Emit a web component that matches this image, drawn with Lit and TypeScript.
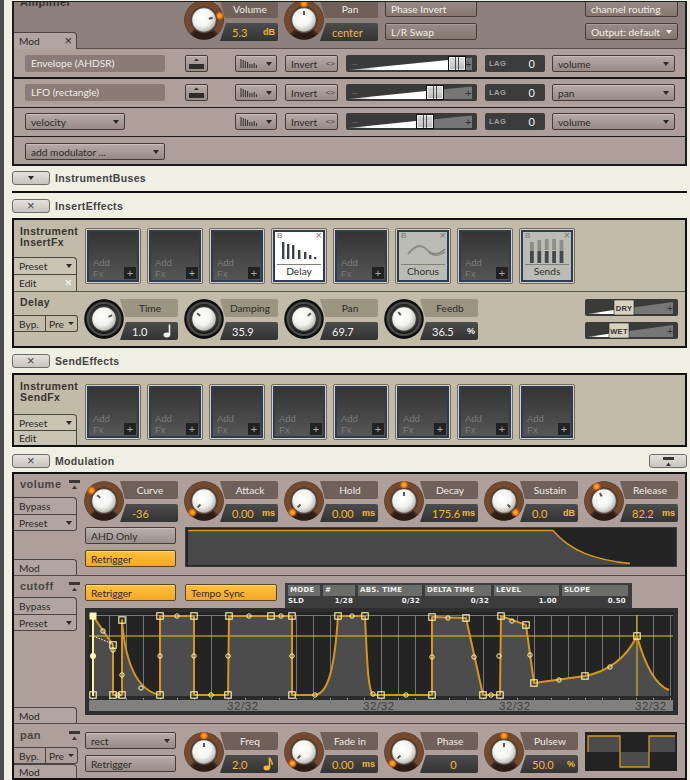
import { LitElement, html, css, svg } from "lit";
import { customElement, property } from "lit/decorators.js";

@customElement("k-knob")
class KKnob extends LitElement {
  @property({ type: Number }) angle = 0;
  @property() theme = "brown";
  static styles = css`
    :host { display: block; width: 40px; height: 40px; position: relative; z-index: 1; }
    svg { display: block; }
  `;
  render() {
    const a = (this.angle * Math.PI) / 180;
    const p = (r: number) => [20 + r * Math.sin(a), 20 - r * Math.cos(a)];
    const [x1, y1] = p(5);
    const [x2, y2] = p(9);
    const [gx, gy] = p(16.2);
    const brown = this.theme === "brown";
    return html`<svg width="40" height="40" viewBox="0 0 40 40">
      <defs>
        <radialGradient id="cap" cx="0.42" cy="0.38" r="0.68">
          <stop offset="0" stop-color="#ffffff" />
          <stop offset="0.55" stop-color="#f3f3ef" />
          <stop offset="0.85" stop-color="#c4c4c0" />
          <stop offset="1" stop-color="#8e8e8a" />
        </radialGradient>
        <radialGradient id="glow">
          <stop offset="0" stop-color="#ffc02a" />
          <stop offset="0.55" stop-color="#f77f10" />
          <stop offset="1" stop-color="#c14a0c" stop-opacity="0.4" />
        </radialGradient>
        <linearGradient id="blk" x1="0" y1="0" x2="0" y2="1">
          <stop offset="0" stop-color="#161616" />
          <stop offset="0.45" stop-color="#3a3a3a" />
          <stop offset="1" stop-color="#0c0c0c" />
        </linearGradient>
      </defs>
      ${brown
        ? svg`<circle cx="20" cy="20" r="19.8" fill="#3a2a22" />
            <path d="M8.3 31.7A16.5 16.5 0 1 1 31.7 31.7" fill="none" stroke="#74492e" stroke-width="6" />
            <path d="M10.5 33.5A16.5 16.5 0 0 0 29.5 33.5" fill="none" stroke="#2c1e17" stroke-width="6" />
            <circle cx="${gx}" cy="${gy}" r="4.4" fill="url(#glow)" />`
        : svg`<circle cx="20" cy="20" r="19.8" fill="url(#blk)" />
            <circle cx="20" cy="20" r="16" fill="none" stroke="#4c4c4c" stroke-width="2.2" />
            <circle cx="20" cy="20" r="18.6" fill="none" stroke="#0c0c0c" stroke-width="1.6" />`}
      <circle cx="20" cy="20" r="13" fill="${brown ? "#5c4f48" : "#3d3d39"}" />
      <circle cx="20" cy="20" r="11.8" fill="url(#cap)" />
      <line x1="${x1}" y1="${y1}" x2="${x2}" y2="${y2}" stroke="#555" stroke-width="2" />
    </svg>`;
  }
}

const arrow = (c = "") => html`<span class="arr ${c}"></span>`;

const wave = html`<svg width="18" height="9" viewBox="0 0 18 9"><path d="M1 0v9M3.2 1v8M5.4 2v7M7.6 3v6M9.8 5v4M12 5v4M14.2 4v5M16.4 6v3" stroke="#332f2d" stroke-width="1" fill="none"/></svg>`;

const upIcon = html`<svg width="11" height="9" viewBox="0 0 11 9"><rect x="0" y="0" width="11" height="3" fill="#3a3634"/><path d="M3 9L5.5 5.5L8 9z" fill="#3a3634"/></svg>`;

const smallBtn = html`<div class="btn square"><svg width="15" height="11" viewBox="0 0 15 11"><path d="M5 3L7.5 0.5L10 3z" fill="#2a2a2a"/><rect x="0" y="6" width="15" height="5" fill="#2f2d2c"/></svg></div>`;

const note = (col: string, eighth = false) => html`<svg width="10" height="14" viewBox="0 0 10 14" class="note">
  <path d="M6.5 0.5V11" stroke="${col}" stroke-width="1.6" fill="none"/>
  <ellipse cx="3.8" cy="11" rx="3.3" ry="2.4" fill="${col}"/>
  ${eighth ? svg`<path d="M7 1C7.5 4 10 5 9 8" stroke="${col}" stroke-width="1.4" fill="none"/>` : ""}
</svg>`;

function slider(hx: number) {
  const W = 131;
  return html`<svg class="block" width="${W}" height="17" viewBox="0 0 ${W} 17">
    <defs><linearGradient id="h${hx}" x1="0" y1="0" x2="1" y2="0"><stop offset="0" stop-color="#777"/><stop offset="0.3" stop-color="#fff"/></linearGradient>
    <linearGradient id="v${hx}" x1="0" y1="0" x2="0" y2="1"><stop offset="0" stop-color="#fff" stop-opacity=".85"/><stop offset="1" stop-color="#fff" stop-opacity=".45"/></linearGradient></defs>
    <rect width="${W}" height="17" rx="2" fill="#3a3a3a"/>
    <polygon points="${hx},${15 - (hx / 126) * 12.5} 126,2.5 126,15 ${hx},15" fill="#777"/>
    <polygon points="2,15 ${hx},${15 - (hx / 126) * 12.5} ${hx},15" fill="url(#h${hx})"/>
    <text x="6" y="12" font-size="10" font-family="Liberation Sans" fill="#666">–</text>
    <text x="119" y="12.5" font-size="11" font-family="Liberation Sans" fill="#333">+</text>
    <rect x="${hx}.5" y="1.5" width="17" height="14" fill="url(#v${hx})" stroke="#111"/>
    <rect x="${hx + 1}.5" y="2.5" width="15" height="12" fill="none" stroke="#fff" stroke-opacity=".7"/>
    <path d="M${hx + 7}.5 2v13M${hx + 10}.5 2v13" stroke="#222" stroke-opacity=".75"/>
  </svg>`;
}

function mix(hx: number, t: string) {
  const W = 93;
  return html`<svg class="block" width="${W}" height="17" viewBox="0 0 ${W} 17">
    <defs><linearGradient id="d${hx}" x1="0" y1="0" x2="1" y2="0"><stop offset="0" stop-color="#666"/><stop offset="0.5" stop-color="#fff"/></linearGradient></defs>
    <rect width="${W}" height="17" rx="2" fill="#3a3a38"/>
    <polygon points="${hx},${15 - (hx / 88) * 12} 88,3 88,15 ${hx},15" fill="#777"/>
    <polygon points="2,15 ${hx},${15 - (hx / 88) * 12} ${hx},15" fill="url(#d${hx})"/>
    <text x="82" y="12.5" font-size="10" font-family="Liberation Sans" fill="#333">+</text>
    <rect x="${hx}" y="1" width="20" height="15" rx="1" fill="#d8d2bf" stroke="#2a2a28" stroke-width="0.6"/>
    <text x="${hx + 10}" y="11.5" text-anchor="middle" font-size="7.5" font-family="Liberation Sans" font-weight="700" letter-spacing=".3" fill="#333">${t}</text>
  </svg>`;
}

const squares: [number, number][] = [
  [93, 695], [113, 645], [113, 695], [122, 695], [122, 620], [160, 616], [160, 695], [194, 616], [194, 695],
  [228, 695], [229, 616], [271, 616], [292, 616], [292, 695], [338, 616], [365, 616], [381, 695], [432, 695],
  [432, 617], [466, 618], [483, 695], [500, 695], [501, 616], [526, 625], [534, 683], [585, 676], [637, 636],
];
const circles: [number, number][] = [
  [103, 631], [113, 650], [118, 695], [122, 675], [141, 688], [177, 616], [160, 656], [194, 656], [211, 695],
  [228, 656], [249, 616], [281, 616], [292, 656], [315, 695], [352, 616], [373, 694], [406, 695], [432, 657],
  [448, 618], [474, 657], [491, 695], [499, 656], [512, 621], [530, 655], [559, 680], [610, 667],
];
const curve =
  "M93 616L113 645L113 695L122 695L122 620C125 660 135 690 160 695L160 616L194 616L194 695L228 695L229 616L292 616L292 695L314 695C330 695 335 660 338 616L365 616C367 660 368 690 373 695L432 695L432 617L466 618L483 695L500 695L501 616L526 625L534 683L585 676C605 672 625 660 637 636C645 665 655 685 669 690";

function graph() {
  const grid: number[] = [];
  for (let x = 92; x < 672; x += 17) grid.push(x);
  const ticks: number[] = [];
  for (let x = 92; x < 672; x += 17) ticks.push(x);
  return html`<svg class="block" width="593" height="107" viewBox="85 608 593 107">
    <rect x="85" y="608" width="593" height="107" fill="#2e2e2e"/>
    <rect x="89" y="612" width="584" height="84" fill="#242424"/>
    <path d="M89 615.5H673" stroke="#777"/>
    ${grid.map((x) => svg`<path d="M${x}.5 615V696" stroke="#737373"/>`)}
    <path d="${curve}L669 696L93 696Z" fill="#4c4c4c"/>
    <rect x="89" y="696" width="584" height="4" fill="#2a2a2a"/>
    ${ticks.map((x) => svg`<rect x="${x}" y="698" width="1" height="1.5" fill="#aaa"/>`)}
    <rect x="89" y="700" width="584" height="11" fill="#808080"/>
    ${[227, 363, 499, 635].map((x) => svg`<text x="${x}" y="710" font-size="11.5" font-family="Liberation Sans" letter-spacing=".6" fill="#3f3f3f">32/32</text>`)}
    <path d="M89 636H673" stroke="#f0c21e" stroke-width="1"/>
    <path d="M637 615V696" stroke="#f0c21e" stroke-width="1"/>
    <path d="M93 616V696" stroke="#fff19a" stroke-width="2"/>
    <path d="${curve}" fill="none" stroke="#d6951c" stroke-width="2" stroke-linejoin="round"/>
    <path d="M93 636L113 644" stroke="#fff" stroke-dasharray="1.5 1.5" fill="none"/>
    <rect x="89.5" y="612.5" width="7" height="7" fill="#fff6b4"/>
    <circle cx="93" cy="656" r="3" fill="#fff6b4"/>
    ${squares.map(([x, y]) => svg`<rect x="${x - 3.2}" y="${y - 3.2}" width="6.4" height="6.4" fill="none" stroke="#fff6b4" stroke-width="1.1"/>`)}
    ${circles.map(([x, y]) => svg`<circle cx="${x}" cy="${y}" r="2.2" fill="none" stroke="#fff6b4" stroke-width="1"/>`)}
  </svg>`;
}

function envDisplay() {
  return html`<svg class="block" width="492" height="40" viewBox="0 0 492 40">
    <rect width="492" height="40" fill="#232323"/>
    <rect x=".5" y=".5" width="491" height="39" fill="none" stroke="#3d3d3d"/>
    <path d="M3 3.5H368C385 24 410 33 445 36.5V38H3Z" fill="#484848"/>
    <path d="M3 3.5H368C385 24 410 33 445 36.5" fill="none" stroke="#dc9a1a" stroke-width="1.4"/>
  </svg>`;
}

function lfoDisplay() {
  return html`<svg class="block" width="92" height="39" viewBox="0 0 92 39">
    <rect width="92" height="39" fill="#232323"/>
    <rect x="3" y="4" width="32" height="16" fill="#4c4c4c"/>
    <rect x="35" y="20" width="29" height="15" fill="#4c4c4c"/>
    <rect x="64" y="4" width="26" height="16" fill="#4c4c4c"/>
    <path d="M3 20V4H35V35H64V4H90" fill="none" stroke="#d6951c" stroke-width="1.3"/>
  </svg>`;
}

const slotEmpty = html`<div class="slot"><div class="inner empty"><span class="add"><span>Add</span><span>Fx</span></span><span class="plus">+</span></div></div>`;

function slotFilled(name: string, kind: string) {
  let art;
  if (kind === "delay") {
    art = [0, 5, 10, 16, 22, 27, 32].map((x, i) => {
      const h = [17, 15, 14, 9, 7, 4, 2][i];
      return svg`<rect x="${x + 7}" y="${20 - h}" width="2.4" height="${h}" fill="#3b414a"/>`;
    });
  } else if (kind === "chorus") {
    art = svg`<path d="M9 15C16 7 20 5 26 9C32 14 36 19 46 10" fill="none" stroke="#7a7a78" stroke-width="1.5"/><path d="M9 15C16 6 24 5 29 12C33 18 38 18 46 13" fill="none" stroke="#8e8e8c" stroke-width="1.5"/>`;
  } else {
    art = [0, 1, 2, 3, 4].map((i) => {
      const x = 7 + i * 7.4;
      const t = [3, 1, 0, 0, 1][i];
      return svg`<rect x="${x}" y="${t}" width="3.8" height="11" fill="#8d8d8b"/><rect x="${x}" y="12" width="3.8" height="12" fill="#45494e"/>`;
    });
  }
  return html`<div class="slot"><div class="inner filled ${kind}">
    <div class="sl-top"><span class="b">B</span><span class="x">×</span></div>
    <svg class="art" width="48" height="24" viewBox="0 0 48 24">${art}</svg>
    <div class="sl-name">${name}</div>
  </div></div>`;
}

@customElement("app-root")
export class AppRoot extends LitElement {
  static styles = css`
    :host {
      display: block; width: 690px; height: 780px; overflow: hidden; background: #efefe4;
      font-family: Lato, "Liberation Sans", Arial, sans-serif; font-size: 10.2px; color: #2e2a28; letter-spacing: 0;
    }
    * { box-sizing: border-box; }
    .block { display: block; }
    .page { width: 690px; height: 780px; border-left: 4px solid #4c4c4c; padding: 1px 3px 0 8px; display: flex; flex-direction: column; overflow: hidden; }

    .panel { border: 2px solid #111; flex: none; overflow: hidden; }
    .rose { background: #ae9f9b; }
    .tan { background: #c2bbaa; }

    .amp { height: 165px; border-top-width: 1px; border-color: #1c1c1c; }
    .amp-top { height: 47px; background: #8e807c; border-bottom: 1px solid #5a4e4b; display: flex; align-items: flex-start; }
    .amp-name { width: 170px; height: 46px; padding-left: 6px; display: flex; flex-direction: column; justify-content: space-between; flex: none; }
    .title { font-family: "Liberation Sans", sans-serif; font-weight: 700; font-size: 10.5px; line-height: 11px; letter-spacing: 0.4px; color: #39332f; }
    .amp-name .title { margin-top: -5px; font-size: 11px; }
    .amp-name .tab { margin-left: -6px; margin-bottom: -1px; }
    .amp-params { display: flex; gap: 6px; margin-top: -2px; }
    .stack { display: flex; flex-direction: column; width: 92px; gap: 6px; margin-top: -2px; }
    .stack.g1 { margin-left: 7px; }
    .stack.g2 { margin-left: 108px; width: 93px; }

    .row { display: grid; grid-template-columns: 160px 50px 50px 61px 139px 67px 123px; padding-left: 11px; align-items: start; }
    .r1 { height: 30px; padding-top: 6px; border-bottom: 2px solid #151515; }
    .r2 { height: 29px; padding-top: 5px; border-bottom: 1px solid #1f1b1a; }
    .r3 { height: 29px; padding-top: 5px; border-bottom: 1px solid #1f1b1a; }
    .r4 { height: 27px; padding-top: 6px; }

    .btn {
      height: 17px; border: 1px solid #453c3a; border-radius: 2px; line-height: 14px; padding: 0 5px; white-space: nowrap;
      background: linear-gradient(#b8aaa6, #988a86); box-shadow: inset 0 1px 0 #c8bcb8; display: flex; align-items: center; justify-content: space-between;
    }
    .btn.dark { background: linear-gradient(#988a86, #85776f); color: #f2eee8; box-shadow: inset 0 1px 0 #a89a96; }
    .btn.square { width: 23px; padding: 0 3px; justify-content: center; }
    .btn.wide { width: 140px; }
    .btn.w100 { width: 100px; }
    .btn.w123 { width: 123px; }
    .btn.w92 { width: 92px; }
    .btn.wave { width: 42px; padding: 0 4px; }
    .btn.invert { width: 53px; padding: 0 2px 0 5px; }
    .btn.invert small { font-family: "Liberation Sans", sans-serif; font-size: 8px; letter-spacing: 0; color: #444; }
    .btn.yellow { background: linear-gradient(#ffc23c, #f3a826); box-shadow: inset 0 1px 0 #ffd878; border-color: #5a4520; }
    .btn.grey { background: linear-gradient(#bab0ac, #9a8f8c); }
    .arr { width: 0; height: 0; border-left: 3.5px solid transparent; border-right: 3.5px solid transparent; border-top: 4px solid #2a2a2a; flex: none; }
    .arr.light { border-top-color: #f0ece6; }

    .nameplate { width: 140px; height: 17px; background: #8a7b77; color: #f0ece6; border-radius: 2px; padding-left: 6px; line-height: 16px; }

    .lag { width: 60px; height: 17px; background: #3c3c3c; border-radius: 2px; display: flex; justify-content: space-between; align-items: center; padding: 0 10px 0 4px; }
    .lag b { font-family: "Liberation Sans", sans-serif; font-size: 7.5px; color: #a2a2a2; letter-spacing: 0.5px; }
    .lag span { color: #f2f2f2; font-size: 11px; }

    .param { display: grid; grid-template-columns: 36px 58px; grid-template-rows: 18px 18px; row-gap: 5px; width: 94px; flex: none; }
    .param k-knob { grid-row: 1 / 3; grid-column: 1; }
    .lb, .vl { grid-column: 2; display: flex; align-items: center; white-space: nowrap; }
    .lb { justify-content: center; padding: 0 4px 0 6px; clip-path: polygon(0 0, 100% 0, 100% 100%, 5px 100%); border-radius: 0 2px 2px 0; }
    .vl { font-size: 11px; justify-content: space-between; padding: 0 3px 0 12px; clip-path: polygon(6px 0, 100% 0, 100% 100%, 0 100%); border-radius: 0 2px 2px 0; background: linear-gradient(#4c4c4c, #333); }
    .vl.center { justify-content: center; }
    .vl small { font-family: "Liberation Sans", sans-serif; font-size: 9px; font-weight: 700; letter-spacing: 0; }
    .note { display: block; margin-right: 2px; }
    .p-brown .lb { background: #6f605a; color: #f0ece8; }
    .p-brown .vl { color: #f7b534; }
    .p-black .lb { background: #9c9582; color: #2b2b2b; }
    .p-black .vl { color: #f3f3f3; }

    .bar { display: flex; align-items: center; gap: 5px; height: 14px; flex: none; font-family: "Liberation Sans", sans-serif; font-weight: 700; font-size: 10.5px; letter-spacing: 0.35px; color: #434341; }
    .bar .tgl { width: 38px; height: 14px; border: 1px solid #6d6d68; border-radius: 3px; background: linear-gradient(#e4e2da, #c6c4bc); display: flex; align-items: center; justify-content: center; font-weight: 400; color: #444; flex: none; }
    .bar .tgl.r { margin-left: auto; }
    .mt5 { margin-top: 5px; } .mt6 { margin-top: 6px; } .mt7 { margin-top: 7px; } .mt4 { margin-top: 4px; }
    .hline { height: 2px; background: #111; flex: none; }

    .tab { width: 63px; height: 17px; border: 1px solid #4c4440; border-left: 0; border-bottom: 0; border-radius: 0 4px 0 0; padding: 0 4px 0 5px; display: flex; align-items: center; justify-content: space-between; flex: none; }
    .rose .tab { background: #b2a4a0; }
    .tan .tab { background: #c9c3b3; }
    .tab.x { border-radius: 0; }
    .tab.cut { border-top: 1px solid #4c4440; }
    .xm { font-family: "Liberation Sans", sans-serif; font-size: 13px; line-height: 12px; }
    .duo { width: 64px; height: 17px; border: 1px solid #4c4440; border-left: 0; border-radius: 0 3px 3px 0; display: flex; flex: none; }
    .duo > span { display: flex; align-items: center; justify-content: space-between; padding: 0 3px; }
    .duo > span:first-child { width: 32px; border-right: 1px solid #4c4440; padding-left: 5px; }
    .duo > span:last-child { flex: 1; }
    .duo .arr { border-left-width: 3px; border-right-width: 3px; border-top-width: 3.5px; }

    .fx-up { height: 72px; border-bottom: 1px solid #55524a; display: flex; }
    .fx-left { width: 71px; flex: none; display: flex; flex-direction: column; }
    .fx-left .title { padding: 6px 0 0 6px; line-height: 11px; }
    .tabs { margin-top: auto; display: flex; flex-direction: column; }
    .slots { display: flex; gap: 6px; padding-top: 8px; }
    .slot { width: 56px; height: 56px; padding: 1px; border: 1px solid #716c5e; border-radius: 2px; background: #d5d0c2; flex: none; }
    .inner { width: 52px; height: 52px; border: 2px solid #2b3c54; }
    .empty { background: linear-gradient(#343434, #565656); display: flex; justify-content: space-between; align-items: flex-end; padding: 0 1px 1px 4px; }
    .add { color: #7b7b7b; line-height: 11px; font-family: "Liberation Sans", sans-serif; font-size: 9.5px; padding-bottom: 0; display: flex; flex-direction: column; }
    .plus { width: 12px; height: 12px; background: #222; color: #aaa; display: flex; align-items: center; justify-content: center; line-height: 12px; letter-spacing: 0; font-family: "Liberation Sans", sans-serif; font-size: 11px; }
    .filled { background: #bcbcb6; display: flex; flex-direction: column; overflow: hidden; }
    .filled.delay { background: #fff; }
    .sl-top { height: 7px; display: flex; justify-content: space-between; padding: 0 1px 0 2px; font-family: "Liberation Sans", sans-serif; font-size: 8px; line-height: 7px; color: #777; letter-spacing: 0; flex: none; }
    .sl-top .x { font-size: 11px; }
    .art { display: block; flex: none; margin-top: 0; }
    .sl-name { margin: 1px 2px 0; border-top: 1px solid #808078; text-align: center; line-height: 13px; color: #2f2f2f; }

    .fx-low { height: 54px; display: flex; }
    .fx-low-left { width: 70px; flex: none; display: flex; flex-direction: column; padding-top: 5px; }
    .fx-low-left .title { padding-left: 6px; }
    .fx-low-left .duo { margin-top: 7px; }
    .params { display: flex; gap: 6px; padding-top: 7px; }
    .mix { margin-left: 107px; display: flex; flex-direction: column; gap: 6px; padding-top: 7px; }

    .mod { height: 308px; }
    .modsec { display: flex; border-bottom: 1px solid #544a47; flex: none; }
    .modleft { width: 70px; flex: none; display: flex; flex-direction: column; }
    .modname { display: flex; align-items: center; justify-content: space-between; padding: 0 4px 0 6px; height: 11px; }
    .modname .title { font-size: 11px; letter-spacing: 0.5px; color: #4a4441; }
    .modright { flex: 1; display: flex; flex-direction: column; }
    .s1 { height: 102px; }
    .s2 { height: 148px; }
    .s3 { height: 54px; border-bottom: 0; }
    .s1 .modname { margin-top: 5px; }
    .s1 .tabs1 { margin-top: 7px; }
    .s2 .modname { margin-top: 5px; }
    .s2 .tabs1 { margin-top: 5px; }
    .s3 .modname { margin-top: 6px; }
    .s3 .duo { margin-top: 6px; }
    .tabs1 { display: flex; flex-direction: column; }
    .tabs1 .tab:last-child { border-bottom: 1px solid #4c4440; border-radius: 0 0 3px 0; }
    .modtab { margin-top: auto; }
    .s1 .params { padding-top: 7px; }
    .r-disp { display: flex; margin: 5px 0 0 1px; gap: 9px; }
    .col { display: flex; flex-direction: column; gap: 6px; flex: none; width: 91px; }
    .col .btn { width: 91px; }
    .r-cut { display: flex; margin: 8px 0 0 1px; height: 24px; }
    .r-cut .btn { width: 91px; flex: none; }
    .r-cut .btn + .btn { width: 92px; margin: 0 8px 0 9px; }
    .graph { margin-left: 1px; width: 593px; }

    .tbl { width: 347px; height: 25px; margin-top: -1px; background: #3c3c3c; padding: 2px 3px; display: grid; grid-template-columns: 32px 32px 64px 66px 65px 66px; column-gap: 3px; grid-template-rows: 11px 11px;
      font-family: "DejaVu Sans", sans-serif; font-size: 7px; font-weight: 700; letter-spacing: 0.25px; color: #f0f0f0; }
    .tbl .h { background: #6c6c6a; padding-left: 2px; line-height: 11px; white-space: nowrap; overflow: hidden; }
    .tbl .v { line-height: 11px; text-align: right; padding-right: 2px; white-space: nowrap; }
    .tbl .v.l { text-align: left; }

    .s3 .r3w { display: flex; padding: 8px 0 0 1px; gap: 8px; }
    .s3 .params { padding-top: 0; }
    .s3 .col { gap: 6px; }
    .lfo { margin-left: -1px; }
  `;

  param(l: string, v: unknown, unit: unknown, angle: number, theme = "brown", center = false) {
    return html`<div class="param p-${theme}">
      <k-knob .angle=${angle} .theme=${theme}></k-knob>
      <div class="lb">${l}</div>
      <div class="vl ${center ? "center" : ""}"><span>${v}</span>${unit}</div>
    </div>`;
  }

  render() {
    const ms = html`<small>ms</small>`;
    const db = html`<small>dB</small>`;
    const pct = html`<small>%</small>`;
    const invert = html`<div class="btn invert">Invert <small>&lt;&gt;</small></div>`;
    const waveB = html`<div class="btn wave">${wave}${arrow()}</div>`;
    const lag = html`<div class="lag"><b>LAG</b><span>0</span></div>`;
    const dd = (t: string, c: string) => html`<div class="btn ${c}">${t}${arrow()}</div>`;
    return html`<div class="page">
      <div class="panel rose amp">
        <div class="amp-top">
          <div class="amp-name">
            <div class="title">Amplifier</div>
            <div class="tab"><span>Mod</span><span class="xm">×</span></div>
          </div>
          <div class="amp-params">
            ${this.param("Volume", "5.3", db, 75)}
            ${this.param("Pan", "center", "", 0)}
          </div>
          <div class="stack g1">
            <div class="btn dark">Phase Invert</div>
            <div class="btn dark">L/R Swap</div>
          </div>
          <div class="stack g2">
            <div class="btn dark">channel routing</div>
            <div class="btn dark">Output: default ${arrow("light")}</div>
          </div>
        </div>
        <div class="row r1">
          <div class="nameplate">Envelope (AHDSR)</div>${smallBtn}${waveB}${invert}${slider(102)}${lag}${dd("volume", "w123")}
        </div>
        <div class="row r2">
          <div class="nameplate">LFO (rectangle)</div>${smallBtn}${waveB}${invert}${slider(80)}${lag}${dd("pan", "w123")}
        </div>
        <div class="row r3">
          ${dd("velocity", "w100")}<span></span>${waveB}${invert}${slider(70)}${lag}${dd("volume", "w123")}
        </div>
        <div class="row r4">${dd("add modulator ...", "wide")}</div>
      </div>

      <div class="bar mt5"><div class="tgl">${arrow()}</div>InstrumentBuses</div>
      <div class="hline mt6"></div>
      <div class="bar mt6"><div class="tgl"><span class="xm">×</span></div>InsertEffects</div>

      <div class="panel tan mt5" style="height:130px">
        <div class="fx-up">
          <div class="fx-left">
            <div class="title">Instrument<br />InsertFx</div>
            <div class="tabs">
              <div class="tab"><span>Preset</span>${arrow()}</div>
              <div class="tab x cut"><span>Edit</span><span class="xm" style="color:#fff">×</span></div>
            </div>
          </div>
          <div class="slots">
            ${slotEmpty}${slotEmpty}${slotEmpty}${slotFilled("Delay", "delay")}${slotEmpty}${slotFilled("Chorus", "chorus")}${slotEmpty}${slotFilled("Sends", "sends")}
          </div>
        </div>
        <div class="fx-low">
          <div class="fx-low-left">
            <div class="title">Delay</div>
            <div class="duo"><span>Byp.</span><span>Pre${arrow()}</span></div>
          </div>
          <div class="params">
            ${this.param("Time", "1.0", note("#f3f3f3"), 65, "black")}
            ${this.param("Damping", "35.9", "", -50, "black")}
            ${this.param("Pan", "69.7", "", 50, "black")}
            ${this.param("Feedb", "36.5", pct, -40, "black")}
          </div>
          <div class="mix">${mix(29, "DRY")}${mix(24, "WET")}</div>
        </div>
      </div>

      <div class="bar mt6"><div class="tgl"><span class="xm">×</span></div>SendEffects</div>
      <div class="panel tan mt5" style="height:74px">
        <div class="fx-up" style="height:70px;border:0">
          <div class="fx-left">
            <div class="title">Instrument<br />SendFx</div>
            <div class="tabs">
              <div class="tab" style="height:16px"><span>Preset</span>${arrow()}</div>
              <div class="tab x cut" style="height:15px"><span>Edit</span></div>
            </div>
          </div>
          <div class="slots" style="padding-top:9px">
            ${slotEmpty}${slotEmpty}${slotEmpty}${slotEmpty}${slotEmpty}${slotEmpty}${slotEmpty}${slotEmpty}
          </div>
        </div>
      </div>

      <div class="bar mt7"><div class="tgl"><span class="xm">×</span></div>Modulation<div class="tgl r">${upIcon}</div></div>

      <div class="panel rose mod mt4">
        <div class="modsec s1">
          <div class="modleft">
            <div class="modname"><span class="title">volume</span>${upIcon}</div>
            <div class="tabs1">
              <div class="tab"><span>Bypass</span></div>
              <div class="tab x cut"><span>Preset</span>${arrow()}</div>
            </div>
            <div class="tab modtab" style="height:16px"><span>Mod</span></div>
          </div>
          <div class="modright">
            <div class="params">
              ${this.param("Curve", "-36", "", -50)}
              ${this.param("Attack", "0.00", ms, -135)}
              ${this.param("Hold", "0.00", ms, -135)}
              ${this.param("Decay", "175.6", ms, 0)}
              ${this.param("Sustain", "0.0", db, 135)}
              ${this.param("Release", "82.2", ms, -27)}
            </div>
            <div class="r-disp">
              <div class="col">
                <div class="btn grey">AHD Only</div>
                <div class="btn yellow">Retrigger</div>
              </div>
              ${envDisplay()}
            </div>
          </div>
        </div>

        <div class="modsec s2">
          <div class="modleft">
            <div class="modname"><span class="title">cutoff</span>${upIcon}</div>
            <div class="tabs1">
              <div class="tab"><span>Bypass</span></div>
              <div class="tab x cut"><span>Preset</span>${arrow()}</div>
            </div>
            <div class="tab modtab" style="height:16px"><span>Mod</span></div>
          </div>
          <div class="modright">
            <div class="r-cut">
              <div class="btn yellow">Retrigger</div>
              <div class="btn yellow">Tempo Sync</div>
              <div class="tbl">
                <div class="h">MODE</div><div class="h">#</div><div class="h">ABS. TIME</div><div class="h">DELTA TIME</div><div class="h">LEVEL</div><div class="h">SLOPE</div>
                <div class="v l">SLD</div><div class="v">1/28</div><div class="v">0/32</div><div class="v">0/32</div><div class="v">1.00</div><div class="v">0.50</div>
              </div>
            </div>
            <div class="graph">${graph()}</div>
          </div>
        </div>

        <div class="modsec s3">
          <div class="modleft">
            <div class="modname"><span class="title">pan</span>${upIcon}</div>
            <div class="duo"><span>Byp.</span><span>Pre${arrow()}</span></div>
            <div class="tab modtab" style="height:15px"><span>Mod</span></div>
          </div>
          <div class="modright">
            <div class="r3w">
              <div class="col">
                <div class="btn">rect${arrow()}</div>
                <div class="btn">Retrigger</div>
              </div>
              <div class="params">
                ${this.param("Freq", "2.0", note("#f7b534", true), 0)}
                ${this.param("Fade in", "0.00", ms, -135)}
                ${this.param("Phase", "0", "", -135, "brown", true)}
                ${this.param("Pulsew", "50.0", pct, 0)}
              </div>
              <div class="lfo">${lfoDisplay()}</div>
            </div>
          </div>
        </div>
      </div>
    </div>`;
  }
}
